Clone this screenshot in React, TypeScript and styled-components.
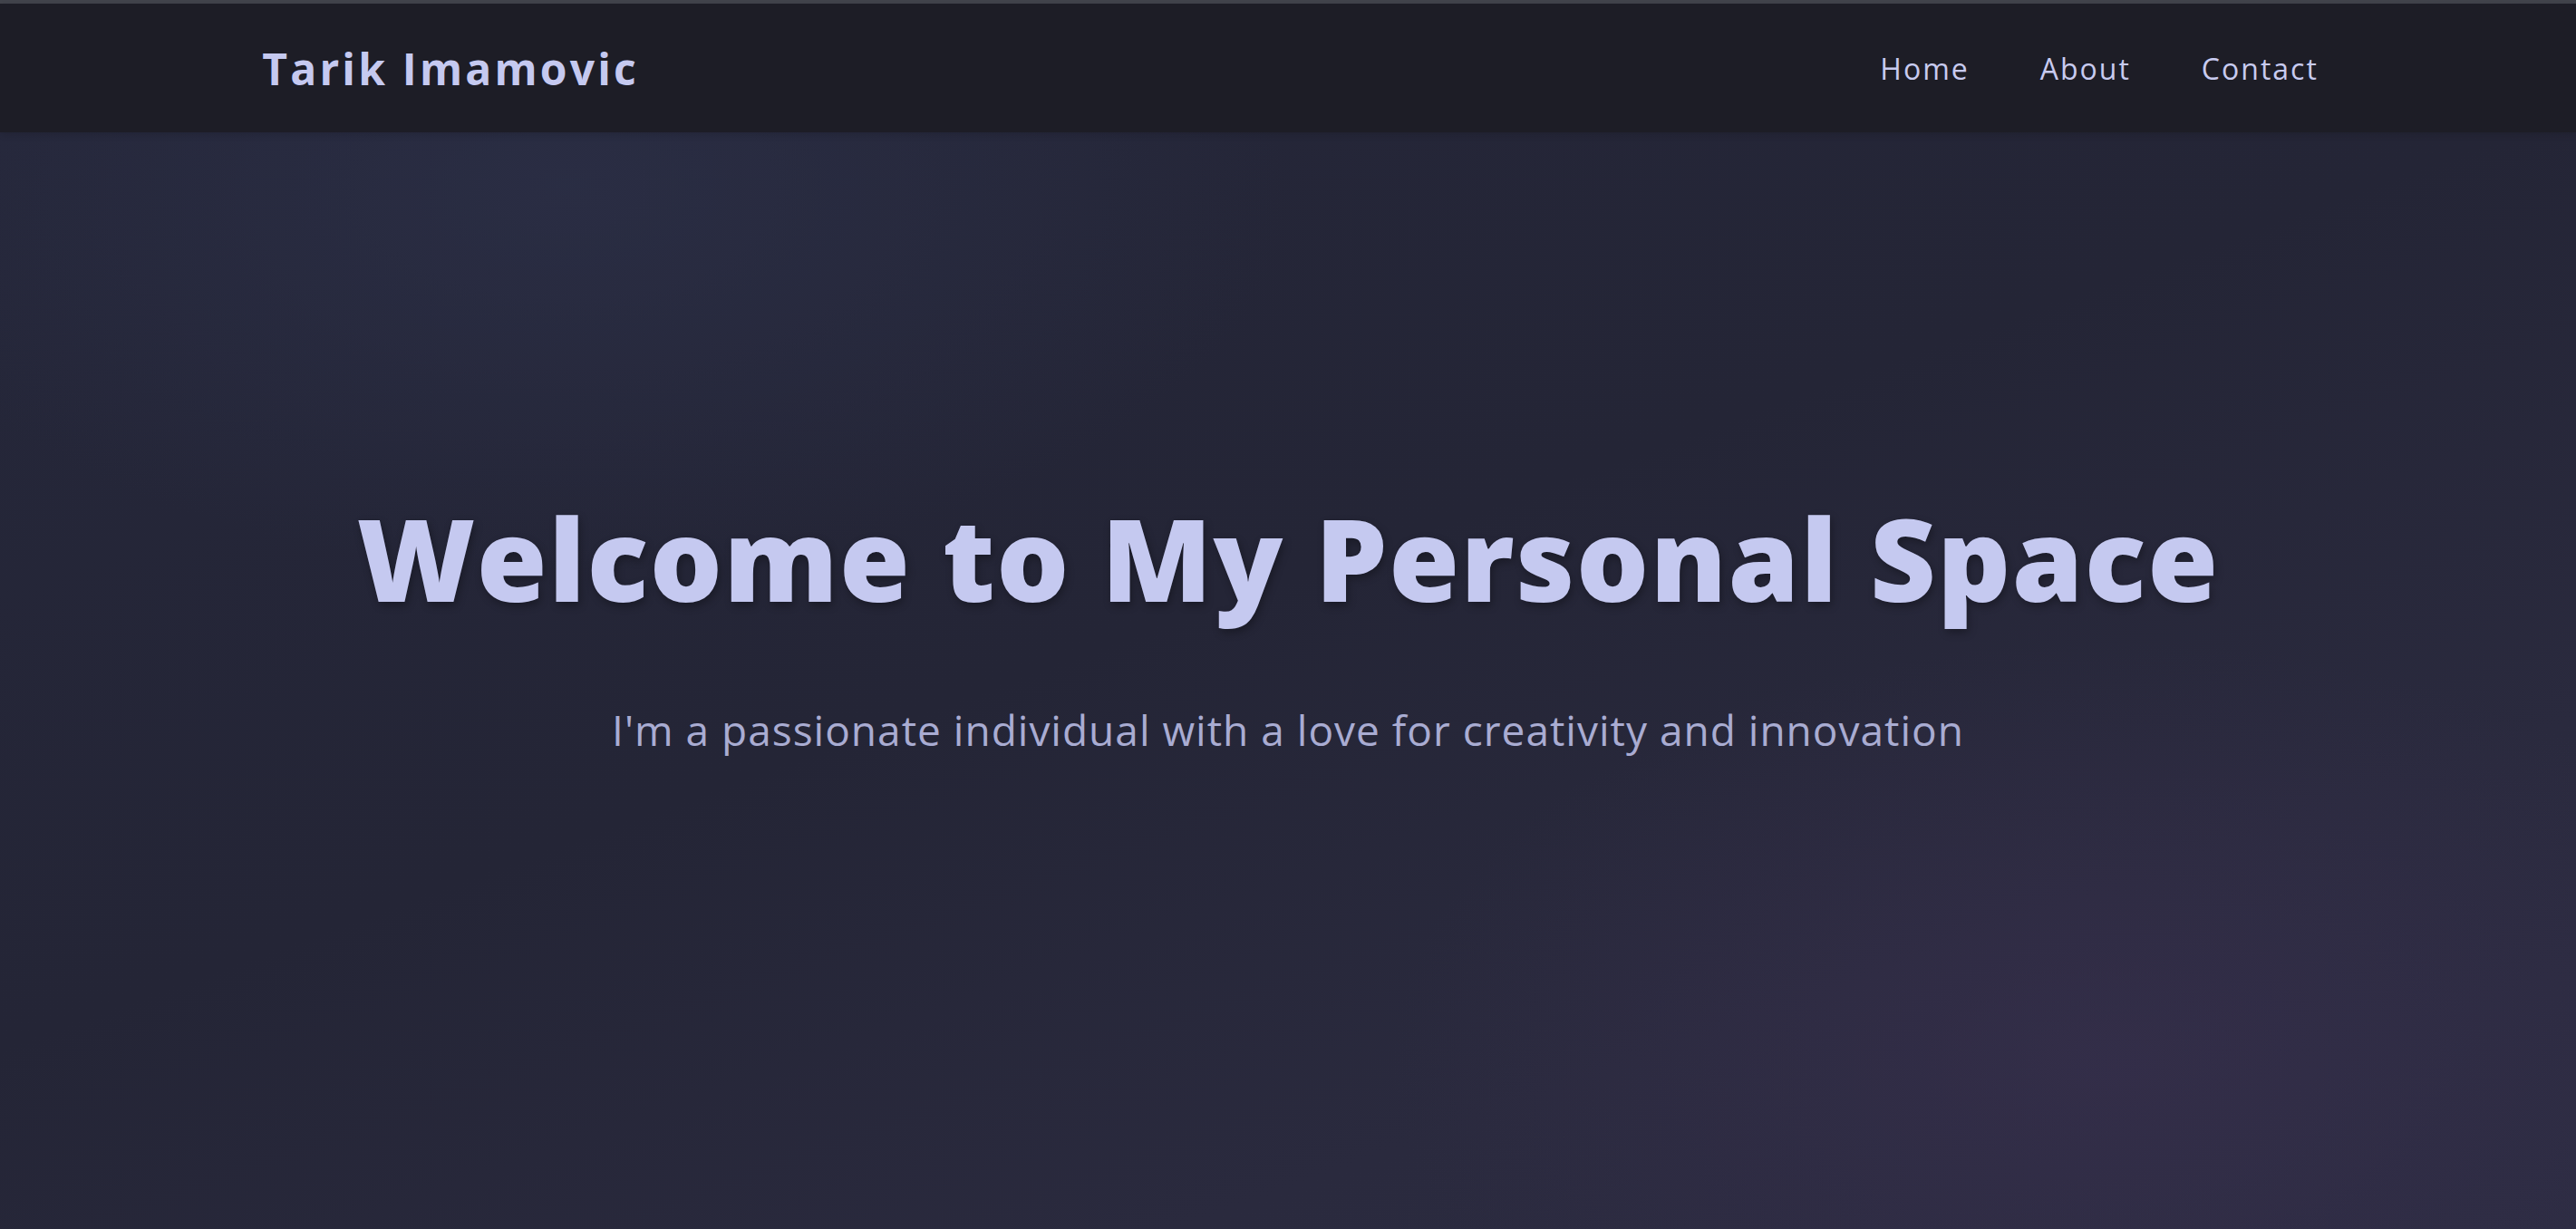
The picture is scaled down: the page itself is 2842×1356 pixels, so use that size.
import styled, { createGlobalStyle } from "styled-components";

const GlobalStyle = createGlobalStyle`
  * {
    box-sizing: border-box;
  }
  html, body {
    margin: 0;
    padding: 0;
    min-height: 100vh;
    background: #24253a;
    font-family: "Open Sans", "DejaVu Sans", sans-serif;
  }
`;

const Page = styled.div`
  display: flex;
  flex-direction: column;
  min-height: 100vh;
  border-top: 4px solid #42444c;
`;

const Header = styled.header`
  display: flex;
  align-items: center;
  justify-content: space-between;
  height: 142px;
  padding: 0 10%;
  background: #1d1d26;
  box-shadow: 0 2px 8px rgba(0, 0, 0, 0.15);
  position: relative;
  z-index: 1;
`;

const Logo = styled.a`
  padding-left: 5px;
  color: #c5c9f0;
  font-size: 48px;
  font-weight: 700;
  letter-spacing: 3.2px;
  text-decoration: none;
`;

const Nav = styled.nav`
  display: flex;
  align-items: center;
  gap: 78px;
`;

const NavLink = styled.a`
  color: #c8cbf0;
  font-size: 32px;
  font-weight: 500;
  letter-spacing: 2px;
  text-decoration: none;
`;

const Hero = styled.main`
  flex: 1;
  display: flex;
  flex-direction: column;
  align-items: center;
  justify-content: center;
  padding: 0 5% 122px;
  text-align: center;
  background:
    radial-gradient(ellipse 40% 55% at 82% 85%, rgba(58, 48, 80, 0.55), transparent 70%),
    radial-gradient(ellipse 40% 50% at 22% 5%, rgba(44, 48, 72, 0.7), transparent 70%),
    linear-gradient(160deg, #25273a 0%, #242536 45%, #2a2a3e 75%, #2c2c42 100%);
`;

const Title = styled.h1`
  margin: 0 0 80px;
  color: #c5c9f0;
  font-size: 126px;
  font-weight: 800;
  line-height: 1.2;
  letter-spacing: 1.5px;
  text-shadow: 2px 4px 10px rgba(0, 0, 0, 0.3);
`;

const Subtitle = styled.p`
  margin: 0;
  color: #a9acd2;
  font-size: 46px;
  font-weight: 400;
  line-height: 1.5;
  letter-spacing: 1px;
`;

export default function App() {
  return (
    <>
      <GlobalStyle />
      <Page>
        <Header>
          <Logo href="#">Tarik Imamovic</Logo>
          <Nav>
            <NavLink href="#">Home</NavLink>
            <NavLink href="#">About</NavLink>
            <NavLink href="#">Contact</NavLink>
          </Nav>
        </Header>
        <Hero>
          <Title>Welcome to My Personal Space</Title>
          <Subtitle>I'm a passionate individual with a love for creativity and innovation</Subtitle>
        </Hero>
      </Page>
    </>
  );
}
